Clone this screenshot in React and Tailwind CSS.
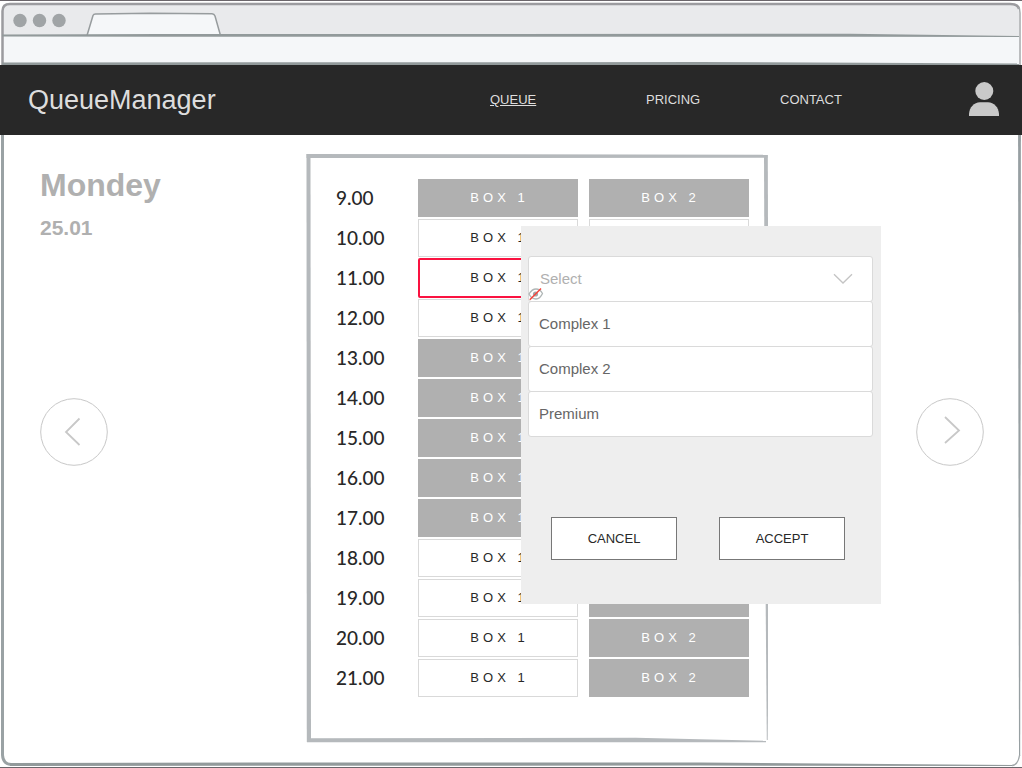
import React, { useState } from "react";

const HOURS = [
  ["9.00", "busy", "busy"],
  ["10.00", "free", "free"],
  ["11.00", "selected", "free"],
  ["12.00", "free", "free"],
  ["13.00", "busy", "free"],
  ["14.00", "busy", "free"],
  ["15.00", "busy", "free"],
  ["16.00", "busy", "free"],
  ["17.00", "busy", "busy"],
  ["18.00", "free", "busy"],
  ["19.00", "free", "busy"],
  ["20.00", "free", "busy"],
  ["21.00", "free", "busy"],
];

const SLOT_STYLES = {
  busy: "h-[38px] bg-[#b0b0b0] text-white",
  free: "h-[38px] border border-[#d9d9d9] bg-white text-[#282828]",
  selected: "h-10 rounded-xs border-2 border-[#fa1240] bg-white text-[#282828]",
};

const SERVICES = ["Complex 1", "Complex 2", "Premium"];

function Slot({ label, state }) {
  return (
    <button
      type="button"
      disabled={state === "busy"}
      className={`block w-[160px] pl-[3px] text-center text-[13px] tracking-[4px] ${SLOT_STYLES[state]}`}
    >
      {label}
    </button>
  );
}

function BrowserBar() {
  return (
    <div className="px-[3px] pt-[3px]">
      <div className="flex h-8 items-end rounded-t-lg bg-[#e9eaec]">
        <svg className="h-8 w-[230px]" viewBox="3 4 230 32" aria-hidden="true">
          <g fill="#a0a4a6">
            <circle cx="20" cy="20.5" r="6.7" />
            <circle cx="39.5" cy="20.5" r="6.7" />
            <circle cx="59" cy="20.5" r="6.7" />
          </g>
          <path
            d="M87 35.5 L93 15.5 Q93.6 14 95.500 14 L150 13.200 L212 13.800 Q214.200 14 215 16 L220.500 35.500"
            fill="#f5f7f9"
            stroke="#979c9e"
            strokeWidth="1.500"
          />
        </svg>
      </div>
      <div className="h-[29px] bg-[#f5f7f9]" />
    </div>
  );
}

function WindowOutline() {
  return (
    <svg
      className="pointer-events-none absolute inset-0 h-full w-full"
      viewBox="0 0 1022 766"
      preserveAspectRatio="none"
      fill="none"
      aria-hidden="true"
    >
      <path d="M2.500 66 V10 Q2.500 3 10 3 H1010 Q1018 3 1019 8" stroke="#9b9b9f" strokeWidth="2.500" />
      <path d="M1018.500 6 Q1020 8 1020 12 V64" stroke="#a5a8aa" strokeWidth="1.500" />
      <path d="M2 33.500 L160 33 L850 32.800 L1019 35 L1019 36 L850 35.800 L160 35.800 L2 35.500 Z" fill="#929a9b" />
      <path d="M2 61.500 L700 61 L1019 62.500 L1019 64 H2 Z" fill="#929a9b" />
      <path d="M2.500 64 V754 Q3 763 11 763.500" stroke="#9aa2a4" strokeWidth="3" />
      <path d="M1018 64 L1018.500 500 L1019 755 L1020.200 755 L1020.500 500 L1021 64 Z" fill="#979fa2" />
      <path d="M10 762 L300 761.500 L700 761.500 L1013 764 L1013 765 L700 764.600 L10 765 Z" fill="#929a9b" />
      <path d="M1012 764.500 Q1018 764 1019.600 754" stroke="#a3a9ab" strokeWidth="1.300" />
    </svg>
  );
}

function PanelOutline() {
  return (
    <svg
      className="pointer-events-none absolute inset-0 h-full w-full"
      viewBox="0 0 462 589"
      preserveAspectRatio="none"
      fill="#b5b9bc"
      aria-hidden="true"
    >
      <path d="M0.500 0 H4.500 L5 588 H0.800 Z" />
      <path d="M0.500 0 L461.500 0.800 V3.800 L0.500 4 Z" />
      <path d="M458 1 H461.800 L463 440 L461.700 586 L460.800 586 L459.600 440 Z" />
      <path d="M1 584.200 L330 583.800 L460 586.800 L460 588.200 L1 588.200 Z" />
    </svg>
  );
}

function DayButton({ direction }) {
  const previous = direction === "previous";
  return (
    <button
      type="button"
      aria-label={previous ? "Previous day" : "Next day"}
      className="size-[68px] rounded-full text-[#c8c8c8]"
    >
      <svg viewBox="0 0 68 68" fill="none" stroke="currentColor" aria-hidden="true">
        <circle cx="34" cy="34" r="33.300" />
        <path d={previous ? "M39.500 20.500 L26 34 L39.500 47" : "M29 19 L43 32.500 L29 45"} strokeWidth="1.800" />
      </svg>
    </button>
  );
}

function ServiceDialog() {
  const [service, setService] = useState("");
  return (
    <div
      role="dialog"
      aria-label="Choose a service"
      className="absolute top-[72px] left-[215px] w-[360px] bg-[#eeeeee] pt-[30px] pr-2 pb-11 pl-[7px]"
    >
      <div className="relative">
        <select
          aria-label="Service"
          value={service}
          onChange={(e) => setService(e.target.value)}
          className="block h-[46px] w-full appearance-none rounded-[3px] border border-[#dadada] bg-white px-[11px] text-[15px] text-[#b0b0b0]"
        >
          <option value="">Select</option>
          {SERVICES.map((name) => (
            <option key={name}>{name}</option>
          ))}
        </select>
        <svg
          className="pointer-events-none absolute top-4 right-5 h-3 w-5"
          viewBox="0 0 20 12"
          fill="none"
          stroke="#c4c4c4"
          strokeWidth="1.300"
          aria-hidden="true"
        >
          <path d="M1 2.200 L10 11 L19 2.200" />
        </svg>
        <svg className="pointer-events-none absolute bottom-px left-0 h-[14px] w-4" viewBox="0 0 16 14" fill="none" aria-hidden="true">
          <path d="M1 7 Q4 2 8 2 Q12 2 14.500 6.500 Q12 12 8 12 Q3.500 12 1 7 Z" stroke="#b0b6b6" strokeWidth="1.300" />
          <circle cx="7.500" cy="7" r="2.600" fill="#a3a9a9" />
          <path d="M1.800 12.800 L13 1.500" stroke="#f5443c" strokeWidth="1.500" />
        </svg>
      </div>
      <ul>
        {SERVICES.map((name) => (
          <li key={name} className="-mt-px">
            <button
              type="button"
              onClick={() => setService(name)}
              className="block h-[46px] w-full rounded-[3px] border border-[#dadada] bg-white px-[10px] text-left text-[15px] text-[#666666]"
            >
              {name}
            </button>
          </li>
        ))}
      </ul>
      <div className="mt-20 flex justify-center gap-[42px] pr-[5px]">
        {["CANCEL", "ACCEPT"].map((label) => (
          <button
            key={label}
            type="button"
            className="h-[43px] w-[126px] border border-[#777777] bg-white text-[13px] text-[#282828]"
          >
            {label}
          </button>
        ))}
      </div>
    </div>
  );
}

export default function App() {
  return (
    <div className="relative flex min-h-screen flex-col border-y border-[#6b666b] bg-white font-['Liberation_Sans',Arial,sans-serif]">
      <BrowserBar />
      <WindowOutline />
      <header className="relative flex h-[70px] items-center justify-between bg-[#282828] pr-[23px] pl-7 text-[#dddddd]">
        <a href="#home" className="text-[27px]">
          QueueManager
        </a>
        <div className="flex items-center">
          <nav className="grid grid-cols-[156px_134px_189px] text-[13px]">
            <a href="#queue" className="underline">
              QUEUE
            </a>
            <a href="#pricing">PRICING</a>
            <a href="#contact">CONTACT</a>
          </nav>
          <button type="button" aria-label="Account">
            <svg className="h-9 w-[30px]" viewBox="0 0 30 36" fill="#c9c9c9" aria-hidden="true">
              <circle cx="15.300" cy="9" r="9" />
              <path d="M0 34 V32 C0.500 25 5 20.500 11 20.200 H19 C25 20.500 29.500 25 30 32 V34 Z" />
            </svg>
          </button>
        </div>
      </header>

      <main className="relative grid grow grid-cols-[306fr_462px_254fr] pt-[19px]">
        <section className="pt-[13px] pl-10">
          <h1 className="text-[32px] leading-9 font-bold text-[#b0b0b0]">Mondey</h1>
          <p className="mt-[13px] text-[21px] leading-6 font-bold text-[#b0b0b0]">25.01</p>
          <div className="mt-[158px]">
            <DayButton direction="previous" />
          </div>
        </section>

        <section className="relative self-start pt-6 pb-[45px] pl-[30px]">
          <PanelOutline />
          <table className="border-collapse">
            <tbody>
              {HOURS.map(([hour, first, second]) => (
                <tr key={hour} className="h-10">
                  <th
                    scope="row"
                    className="w-[82px] p-0 text-left font-['Lato',sans-serif] text-[19px] leading-6 font-medium text-[#282828]"
                  >
                    {hour}
                  </th>
                  <td className="w-[171px] p-0">
                    <Slot label="BOX 1" state={first} />
                  </td>
                  <td className="p-0">
                    <Slot label="BOX 2" state={second} />
                  </td>
                </tr>
              ))}
            </tbody>
          </table>
          <ServiceDialog />
        </section>

        <section className="flex justify-end pt-[244px] pr-[38px]">
          <div>
            <DayButton direction="next" />
          </div>
        </section>
      </main>
    </div>
  );
}
